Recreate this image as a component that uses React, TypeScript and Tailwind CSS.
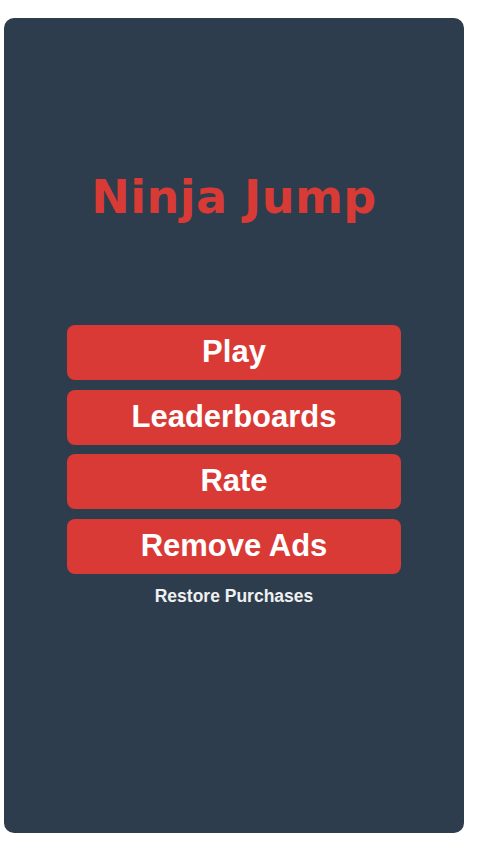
export default function App() {
  const buttons = ["Play", "Leaderboards", "Rate", "Remove Ads"];

  return (
    <main className="min-h-screen bg-white pt-[18px] pl-[4px]">
      <div className="w-[460px] h-[815px] bg-[#2e3d4d] rounded-[10px] flex flex-col items-center pt-[153px]">
        <h1 className="h-[52px] leading-[52px] text-[46px] font-bold tracking-[0.5px] text-[#d83a35] font-['DejaVu_Sans',sans-serif]">
          Ninja Jump
        </h1>

        <div className="mt-[102px] w-[334px] flex flex-col gap-[9.5px]">
          {buttons.map((label) => (
            <button
              key={label}
              className="h-[55px] w-full rounded-lg bg-[#d93a35] text-white text-[31px] font-bold font-['Liberation_Sans',sans-serif] flex items-center justify-center"
            >
              {label}
            </button>
          ))}
        </div>

        <p className="mt-[10px] h-[24px] leading-[24px] text-[17.5px] font-bold text-[#eef0f2] font-['Liberation_Sans',sans-serif]">
          Restore Purchases
        </p>
      </div>
    </main>
  );
}
